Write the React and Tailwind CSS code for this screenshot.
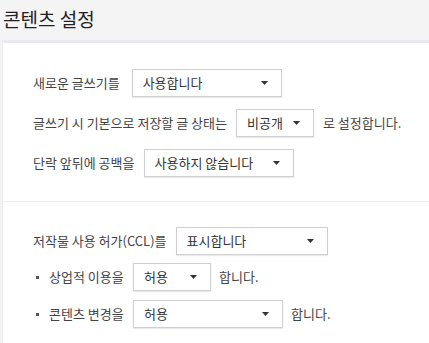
import React from "react";

const Arrow = () => (
  <svg width="7" height="4" viewBox="0 0 7 4" className="shrink-0"><path d="M0 0h7L3.5 4z" fill="#333" /></svg>
);

const Sel = ({ label, w }) => (
  <div
    className={`flex items-center justify-between h-[28px] pl-[10px] pr-[13px] bg-white border border-[#cfcfcf] shadow-[0_1px_1px_rgba(0,0,0,0.08)] text-[#333] ${w}`}
  >
    <span>{label}</span>
    <Arrow />
  </div>
);

const Bullet = () => (
  <span className="w-[8px] shrink-0 flex pl-[3px]"><span className="w-[3px] h-[3px] bg-[#555]" /></span>
);

export default function App() {
  const font = { fontFamily: '"Noto Sans CJK KR", "Noto Sans", sans-serif' };
  return (
    <div className="w-[429px] h-[343px] bg-[#f4f4f4] overflow-hidden" style={font}>
      <div className="h-[40px] pl-[3px] pt-[5px] text-[19px] text-[#222] leading-[28px]">콘텐츠 설정</div>
      <div className="ml-[2px] h-[303px] bg-white border-t-[3px] border-l border-[#e9e9ef] text-[13px] text-[#444]">
        <div className="pl-[30px] pt-[26px] pb-[24px] flex flex-col gap-[12px] border-b border-[#f0f0f0]">
          <div className="flex items-center gap-[12px]">
            <span>새로운 글쓰기를</span>
            <Sel label="사용합니다" w="w-[150px]" />
          </div>
          <div className="flex items-center gap-[9px]">
            <span>글쓰기 시 기본으로 저장할 글 상태는</span>
            <Sel label="비공개" w="w-[78px]" />
            <span>로 설정합니다.</span>
          </div>
          <div className="flex items-center gap-[9px]">
            <span>단락 앞뒤에 공백을</span>
            <Sel label="사용하지 않습니다" w="w-[150px]" />
          </div>
        </div>
        <div className="pl-[30px] pt-[25px] flex flex-col gap-[8px]">
          <div className="flex items-center gap-[9px]">
            <span>저작물 사용 허가(CCL)를</span>
            <Sel label="표시합니다" w="w-[152px]" />
          </div>
          <div className="flex items-center gap-[8px]">
            <Bullet />
            <span className="w-[76px]">상업적 이용을</span>
            <Sel label="허용" w="w-[78px]" />
            <span>합니다.</span>
          </div>
          <div className="flex items-center gap-[8px] mt-[1px]">
            <Bullet />
            <span className="w-[76px]">콘텐츠 변경을</span>
            <Sel label="허용" w="w-[150px]" />
            <span>합니다.</span>
          </div>
        </div>
      </div>
    </div>
  );
}
